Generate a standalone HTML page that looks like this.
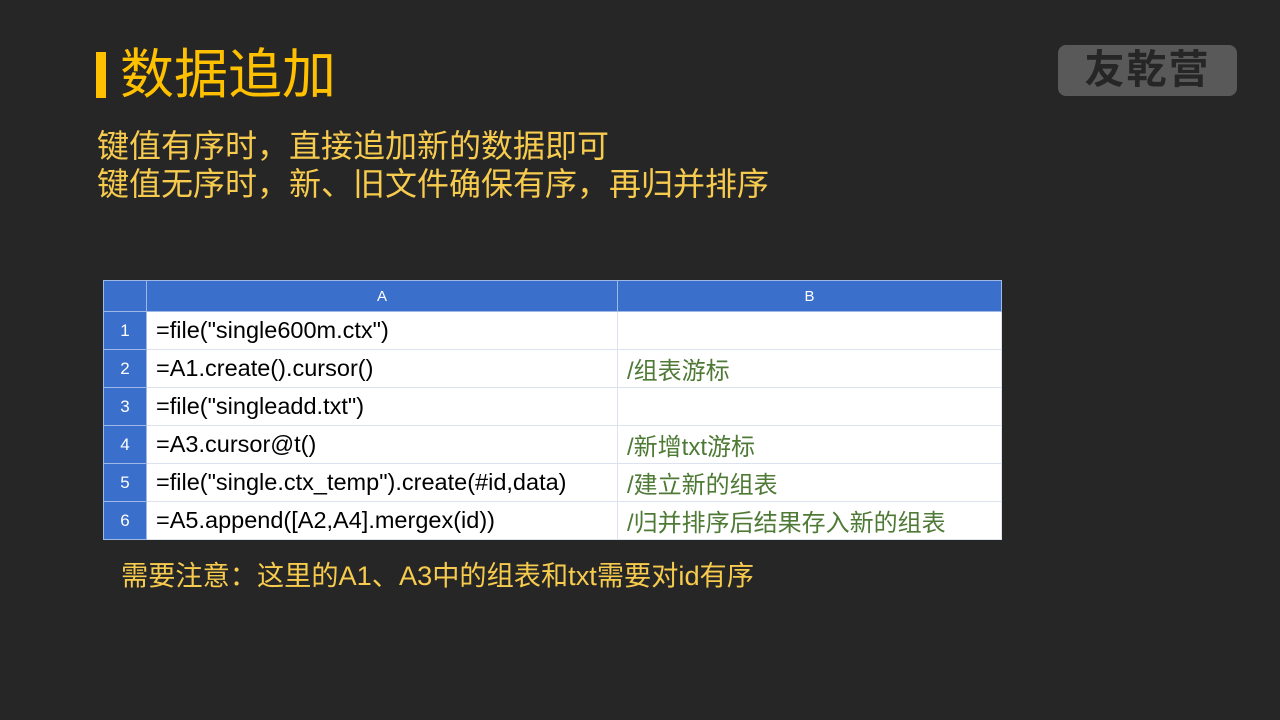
<!DOCTYPE html>
<html><head><meta charset="utf-8"><style>
body{margin:0;width:1280px;height:720px;background:#262626;position:relative;overflow:hidden;font-family:"Liberation Sans","Noto Sans CJK SC",sans-serif}
.bar{position:absolute;left:96px;top:52px;width:10px;height:46px;background:#FFC000}
.title{position:absolute;left:120px;top:43px;font-size:54px;color:#FFC000;line-height:64px}
.sub{position:absolute;left:97px;top:127px;font-size:32px;color:#F7CB4D;line-height:38px;white-space:nowrap}
.logo{position:absolute;left:1058px;top:45px;width:179px;height:51px;background:#595959;border-radius:8px;color:#262626;font-size:40px;font-weight:bold;text-align:center;line-height:51px;letter-spacing:2px}
table{position:absolute;left:103px;top:280px;border-collapse:collapse;font-size:23.5px}
td{border:1px solid #dde3ee;height:37px;padding:0;background:#fff;color:#000;white-space:nowrap}
tr.h td{background:#3A6FCC;color:#fff;text-align:center;font-size:15px;height:30px;border-color:#9fb8e6}
td.n{background:#3A6FCC;color:#fff;text-align:center;font-size:17px;width:42px;border-color:#9fb8e6}
td.a{width:471px;padding-left:9px;box-sizing:border-box}
td.b{width:384px;padding-left:9px;box-sizing:border-box;color:#4E7A35;font-size:24px}
.note{position:absolute;left:121px;top:558px;font-size:27.2px;color:#F7CB4D;line-height:36px;white-space:nowrap}
</style></head><body>
<div class="bar"></div>
<div class="title">数据追加</div>
<div class="sub">键值有序时，直接追加新的数据即可<br>键值无序时，新、旧文件确保有序，再归并排序</div>
<div class="logo">友乾营</div>
<table>
<tr class="h"><td style="width:42px"></td><td>A</td><td>B</td></tr>
<tr><td class="n">1</td><td class="a">=file("single600m.ctx")</td><td class="b"></td></tr>
<tr><td class="n">2</td><td class="a">=A1.create().cursor()</td><td class="b">/组表游标</td></tr>
<tr><td class="n">3</td><td class="a">=file("singleadd.txt")</td><td class="b"></td></tr>
<tr><td class="n">4</td><td class="a">=A3.cursor@t()</td><td class="b">/新增txt游标</td></tr>
<tr><td class="n">5</td><td class="a">=file("single.ctx_temp").create(#id,data)</td><td class="b">/建立新的组表</td></tr>
<tr><td class="n">6</td><td class="a">=A5.append([A2,A4].mergex(id))</td><td class="b">/归并排序后结果存入新的组表</td></tr>
</table>
<div class="note">需要注意：这里的A1、A3中的组表和txt需要对id有序</div>
</body></html>
